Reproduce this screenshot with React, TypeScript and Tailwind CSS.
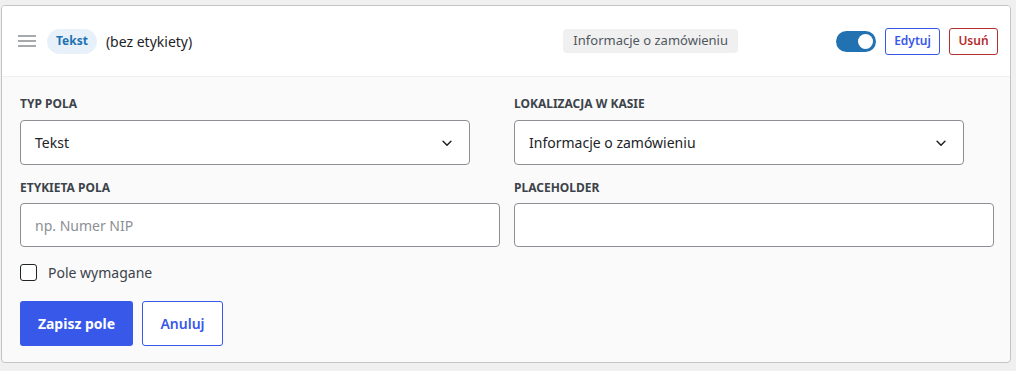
import React from "react";

const font = { fontFamily: '"Noto Sans", "Open Sans", Arial, sans-serif' };

function Chevron() {
  return (
    <svg width="14" height="14" viewBox="0 0 16 16" fill="none" stroke="#1d2327" strokeWidth="1.7" strokeLinecap="round" strokeLinejoin="round">
      <path d="M3.5 6 L8 10.5 L12.5 6" />
    </svg>
  );
}

export default function App() {
  return (
    <div className="min-h-[371px] bg-[#f0f0f1] pt-[5px] pl-px pr-[5px] pb-2" style={font}>
      <div className="border border-[#c3c4c7] rounded-[4px] bg-[#fafafa] overflow-hidden">
        <div className="h-[71px] bg-white border-b border-[#f0f0f1] flex items-center pl-4 pr-3">
          <svg width="18" height="14" viewBox="0 0 18 14" className="mr-[11px]">
            <rect x="0" y="1" width="18" height="2" fill="#a7aaad" />
            <rect x="0" y="6" width="18" height="2" fill="#a7aaad" />
            <rect x="0" y="11" width="18" height="2" fill="#a7aaad" />
          </svg>
          <span className="h-[25px] px-[9px] rounded-full bg-[#e8f1fa] text-[#2271b1] text-[12px] font-bold flex items-center">Tekst</span>
          <span className="ml-[9px] text-[14px] text-[#1d2327]">(bez etykiety)</span>
          <div className="flex-1" />
          <span className="h-[24px] px-[10px] rounded-[4px] bg-[#f0f0f1] text-[#50575e] text-[13px] flex items-center">Informacje o zamówieniu</span>
          <div className="w-[98px]" />
          <div className="w-[40px] h-[21px] rounded-full bg-[#2271b1] relative">
            <div className="absolute right-[3px] top-[3px] w-[15px] h-[15px] rounded-full bg-white" />
          </div>
          <button className="ml-[9px] h-[27px] w-[55px] border border-[#3858e9] rounded-[3px] bg-white text-[#3858e9] text-[12px] font-semibold">Edytuj</button>
          <button className="ml-[9px] h-[27px] w-[49px] border border-[#b32d2e] rounded-[3px] bg-white text-[#b32d2e] text-[12px] font-semibold">Usuń</button>
        </div>
        <div className="pl-[18px] pr-[16px] pt-[18px] pb-[16px]">
          <div className="grid grid-cols-2 gap-x-[14px]">
            <div>
              <div className="text-[12px] font-bold text-[#3c434a] leading-[18px] mb-[7px]">TYP POLA</div>
              <div className="w-[450px] h-[45px] border border-[#8c8f94] rounded-[4px] bg-white flex items-center justify-between pl-[14px] pr-[15px] text-[14px] text-[#1d2327]">
                <span>Tekst</span>
                <Chevron />
              </div>
            </div>
            <div>
              <div className="text-[12px] font-bold text-[#3c434a] leading-[18px] mb-[7px]">LOKALIZACJA W KASIE</div>
              <div className="w-[450px] h-[45px] border border-[#8c8f94] rounded-[4px] bg-white flex items-center justify-between pl-[14px] pr-[15px] text-[14px] text-[#1d2327]">
                <span>Informacje o zamówieniu</span>
                <Chevron />
              </div>
            </div>
            <div className="mt-[14px]">
              <div className="text-[12px] font-bold text-[#3c434a] leading-[18px] mb-[6px]">ETYKIETA POLA</div>
              <div className="h-[44px] border border-[#8c8f94] rounded-[4px] bg-white flex items-center pl-[14px] text-[14px] text-[#8c8f94]">
                np. Numer NIP
              </div>
            </div>
            <div className="mt-[14px]">
              <div className="text-[12px] font-bold text-[#3c434a] leading-[18px] mb-[6px]">PLACEHOLDER</div>
              <div className="h-[44px] border border-[#8c8f94] rounded-[4px] bg-white" />
            </div>
          </div>
          <div className="flex items-center mt-[15px]">
            <div className="w-[17px] h-[17px] border border-[#1d2327] rounded-[3px] bg-white" />
            <span className="ml-[11px] text-[14px] text-[#3c434a]">Pole wymagane</span>
          </div>
          <div className="flex mt-[18px] gap-[9px]">
            <button className="h-[45px] w-[113px] rounded-[3px] bg-[#3858e9] text-white text-[14px] font-bold">Zapisz pole</button>
            <button className="h-[45px] w-[81px] rounded-[3px] border border-[#3858e9] bg-white text-[#3858e9] text-[14px] font-semibold">Anuluj</button>
          </div>
        </div>
      </div>
    </div>
  );
}
